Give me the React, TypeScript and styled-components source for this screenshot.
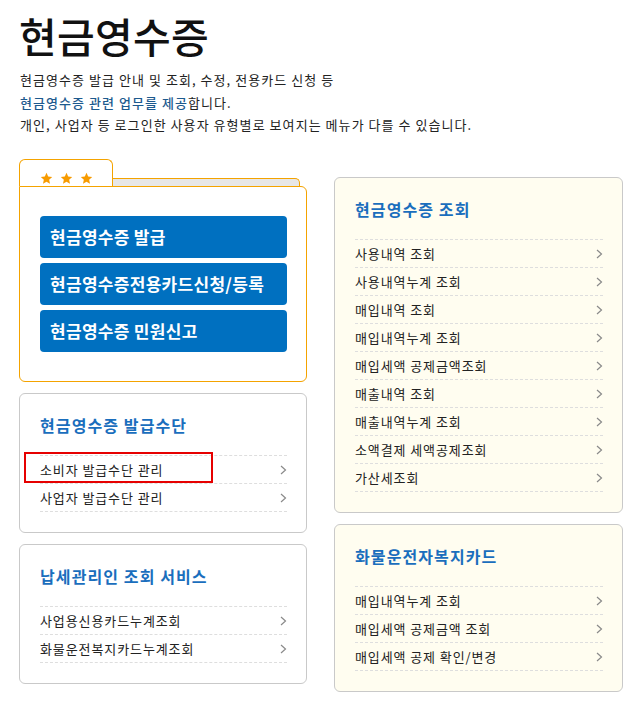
import React from 'react';
import styled, { createGlobalStyle } from 'styled-components';

const GlobalStyle = createGlobalStyle`
  body {
    margin: 0;
    background: #fff;
    font-family: "Noto Sans CJK KR", "Noto Sans", sans-serif;
    color: #222;
  }
  * { box-sizing: border-box; }
`;

const Page = styled.div`
  padding: 0 10px 20px 19px;
`;

const Title = styled.h1`
  margin: 8px 0 0 0;
  font-size: 41px;
  line-height: 54px;
  font-weight: 500;
  letter-spacing: 0.3px;
  color: #111;
`;

const Intro = styled.p`
  margin: 7px 0 0 1px;
  font-size: 13px;
  line-height: 22.5px;
  letter-spacing: 1.05px;
  color: #222;
`;

const Em = styled.span`
  color: #1d5a8e;
  font-weight: 500;
`;

const Columns = styled.div`
  display: grid;
  grid-template-columns: 288px 289px;
  column-gap: 27px;
  align-items: start;
  margin-top: 22px;
`;

const Column = styled.div<{ $offset?: number }>`
  display: flex;
  flex-direction: column;
  gap: 11px;
  padding-top: ${(p) => p.$offset ?? 0}px;
`;

/* folder card with tab */
const orange = '#f4a300';

const Folder = styled.div`
  display: flex;
  flex-direction: column;
`;

const FolderTop = styled.div`
  display: flex;
  height: 27px;
`;

const Tab = styled.div`
  position: relative;
  z-index: 1;
  width: 94px;
  height: 27px;
  margin-bottom: -1px;
  background: #fff;
  border: 1px solid ${orange};
  border-bottom: none;
  border-radius: 6px 6px 0 0;
  padding: 12px 0 0 20px;
  display: flex;
  gap: 7px;
`;

const TabRight = styled.div`
  flex: 1;
  display: flex;
  flex-direction: column;
  justify-content: flex-end;
`;

const Strip = styled.div`
  height: 8px;
  margin-right: 7px;
  margin-left: -2px;
  background: #e7e7e7;
  border: 1px solid ${orange};
  border-bottom: none;
  border-left: none;
  border-radius: 0 5px 0 0;
`;

const FolderBody = styled.div`
  border: 1px solid ${orange};
  border-radius: 0 6px 6px 6px;
  background: #fff;
  padding: 29px 19px 29px 20px;
  display: flex;
  flex-direction: column;
  gap: 5px;
`;

const BigButton = styled.a`
  display: flex;
  align-items: center;
  height: 42px;
  padding-left: 10px;
  border-radius: 4px;
  background: #0070c0;
  color: #fff;
  font-size: 17px;
  font-weight: 700;
  text-decoration: none;
  letter-spacing: 0.3px;
`;

/* list cards */
const Card = styled.div<{ $cream?: boolean }>`
  border: 1px solid #c9c9c9;
  border-radius: 6px;
  background: ${(p) => (p.$cream ? '#fffdf0' : '#fff')};
  padding: 21px 19px 20px 20px;
`;

const CardTitle = styled.h2`
  margin: 0 0 20px 0;
  font-size: 16px;
  line-height: 20px;
  font-weight: 700;
  letter-spacing: 1.1px;
  color: #1a6ebd;
`;

const List = styled.ul`
  list-style: none;
  margin: 0;
  padding: 0;
  border-top: 1px dashed #dedede;
`;

const Row = styled.li`
  position: relative;
  display: flex;
  align-items: center;
  justify-content: space-between;
  height: 28px;
  border-bottom: 1px dashed #dedede;
  font-size: 13px;
  letter-spacing: 0.9px;
  color: #222;
  padding-top: 1px;
`;

const Mark = styled.span`
  position: absolute;
  left: -16px;
  top: -4px;
  width: 189px;
  height: 31px;
  border: 2px solid #e60000;
  pointer-events: none;
`;

const Star = () => (
  <svg width="13" height="13" viewBox="0 0 24 24">
    <path
      d="M12 1.5l3.1 6.9 7.4.8-5.6 5 1.6 7.4L12 17.8l-6.5 3.8 1.6-7.4-5.6-5 7.4-.8z"
      fill="#f79b00"
    />
  </svg>
);

const Chevron = () => (
  <svg width="7" height="10" viewBox="0 0 7 10">
    <polyline points="1,1 5.5,5 1,9" fill="none" stroke="#8a8a8a" strokeWidth="1.2" />
  </svg>
);

function LinkList({ items, marked }: { items: string[]; marked?: number }) {
  return (
    <List>
      {items.map((t, i) => (
        <Row key={t}>
          <span>{t}</span>
          <Chevron />
          {marked === i && <Mark />}
        </Row>
      ))}
    </List>
  );
}

export default function App() {
  return (
    <>
      <GlobalStyle />
      <Page>
        <Title>현금영수증</Title>
        <Intro>
          현금영수증 발급 안내 및 조회, 수정, 전용카드 신청 등
          <br />
          <Em>현금영수증 관련 업무를 제공</Em>합니다.
          <br />
          개인, 사업자 등 로그인한 사용자 유형별로 보여지는 메뉴가 다를 수 있습니다.
        </Intro>
        <Columns>
          <Column>
            <Folder>
              <FolderTop>
                <Tab>
                  <Star />
                  <Star />
                  <Star />
                </Tab>
                <TabRight>
                  <Strip />
                </TabRight>
              </FolderTop>
              <FolderBody>
                <BigButton>현금영수증 발급</BigButton>
                <BigButton>현금영수증전용카드신청/등록</BigButton>
                <BigButton>현금영수증 민원신고</BigButton>
              </FolderBody>
            </Folder>
            <Card>
              <CardTitle>현금영수증 발급수단</CardTitle>
              <LinkList items={['소비자 발급수단 관리', '사업자 발급수단 관리']} marked={0} />
            </Card>
            <Card>
              <CardTitle>납세관리인 조회 서비스</CardTitle>
              <LinkList items={['사업용신용카드누계조회', '화물운전복지카드누계조회']} />
            </Card>
          </Column>
          <Column $offset={18}>
            <Card $cream>
              <CardTitle>현금영수증 조회</CardTitle>
              <LinkList
                items={[
                  '사용내역 조회',
                  '사용내역누계 조회',
                  '매입내역 조회',
                  '매입내역누계 조회',
                  '매입세액 공제금액조회',
                  '매출내역 조회',
                  '매출내역누계 조회',
                  '소액결제 세액공제조회',
                  '가산세조회',
                ]}
              />
            </Card>
            <Card $cream>
              <CardTitle>화물운전자복지카드</CardTitle>
              <LinkList items={['매입내역누계 조회', '매입세액 공제금액 조회', '매입세액 공제 확인/변경']} />
            </Card>
          </Column>
        </Columns>
      </Page>
    </>
  );
}
